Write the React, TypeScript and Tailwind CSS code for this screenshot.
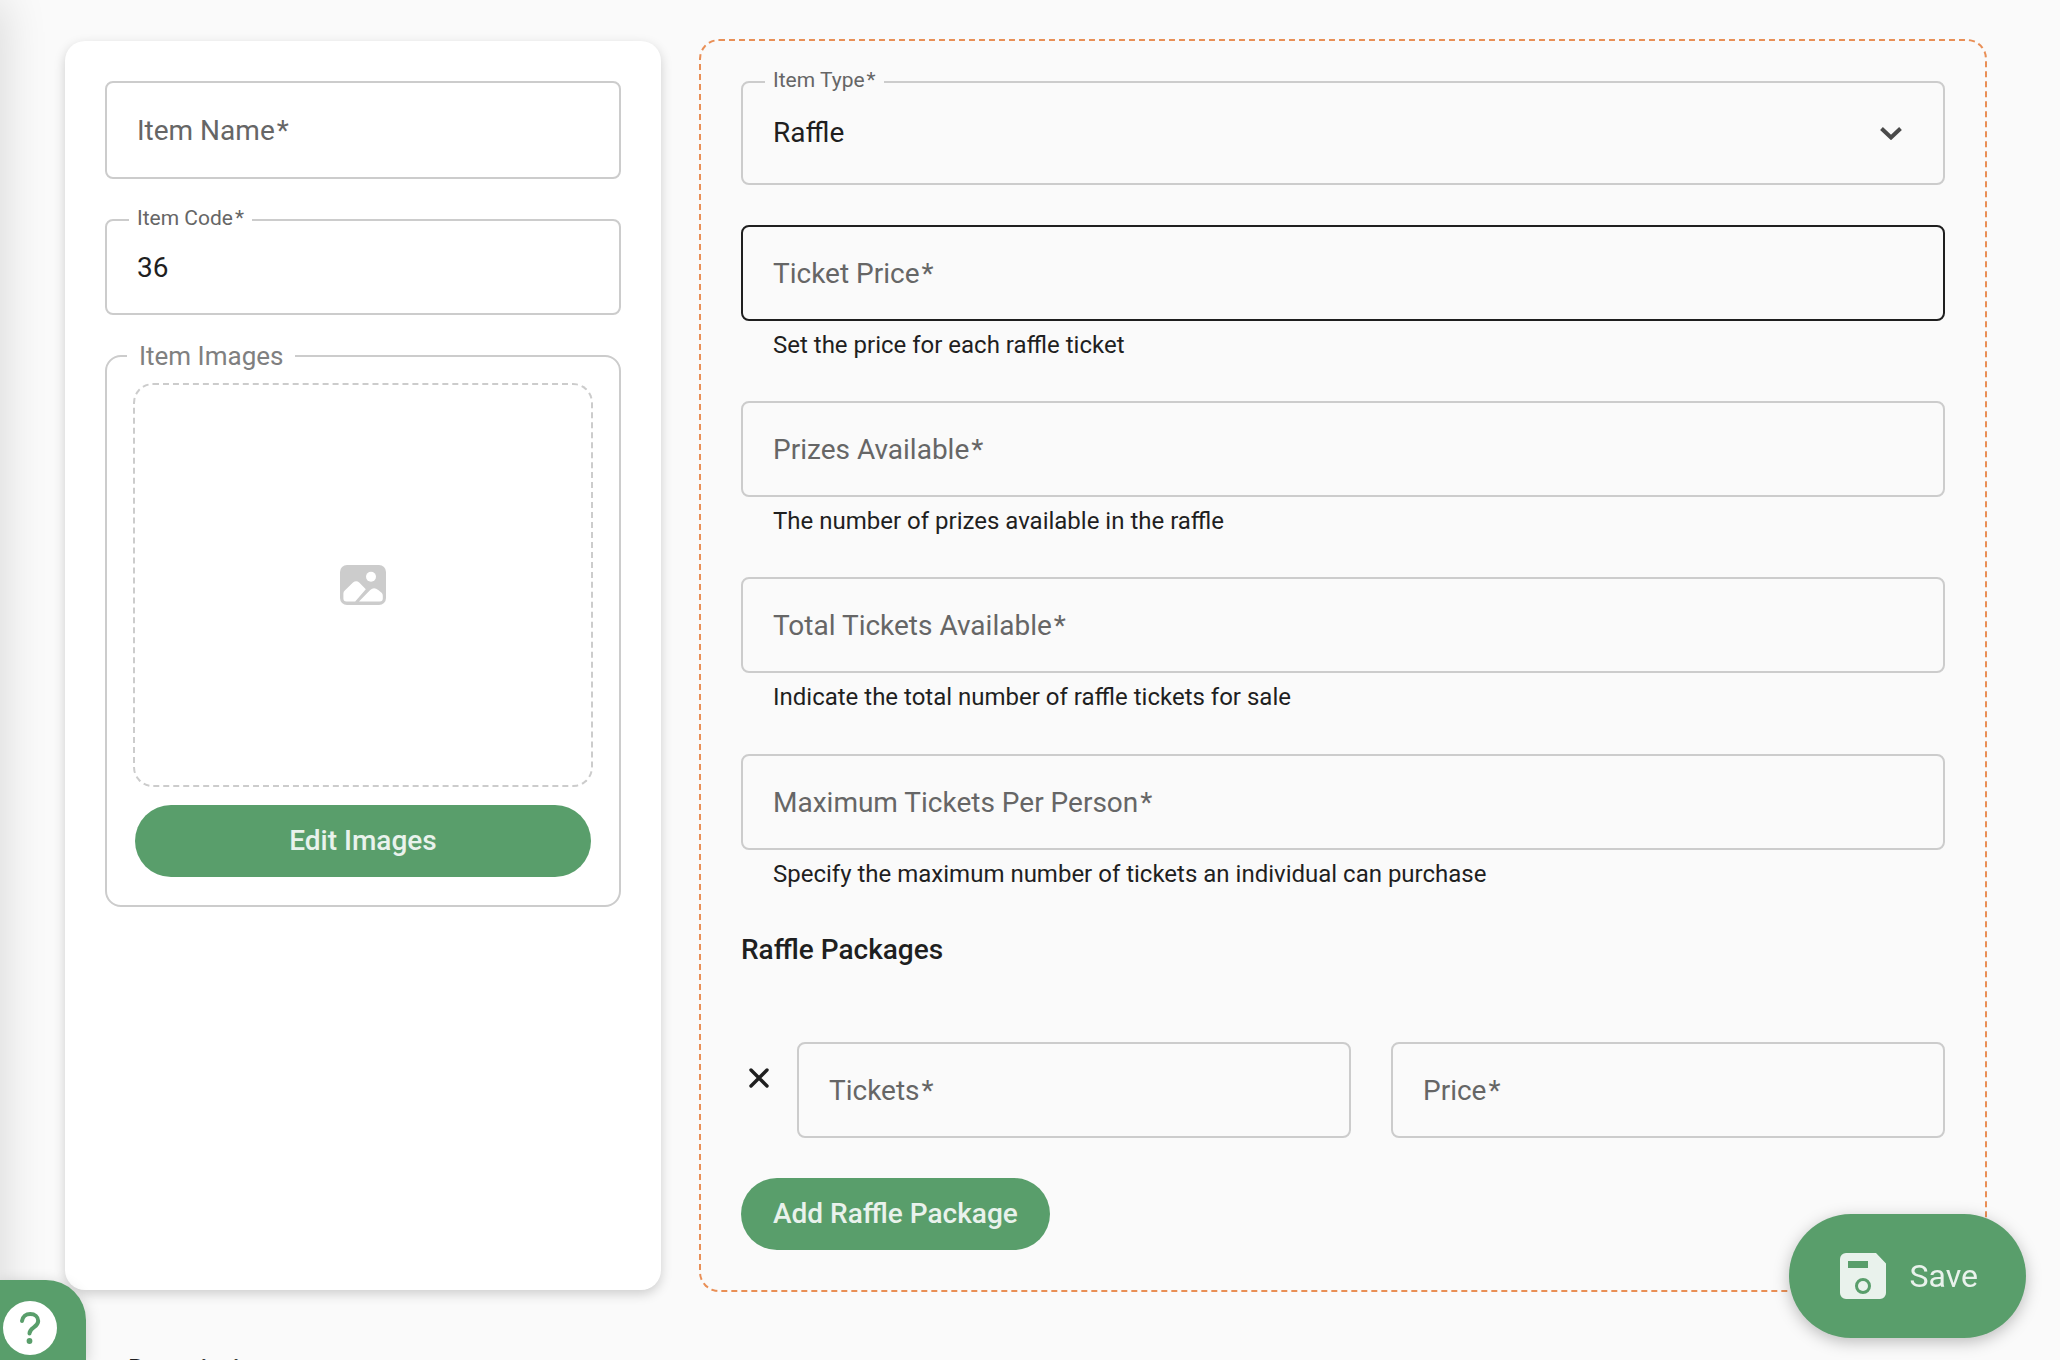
import React, { useId } from "react";

type FieldProps = {
  label: string;
  hint?: string;
  defaultValue?: string;
  active?: boolean;
  height?: string;
  className?: string;
};

const Required = () => <span className="ml-0.5">*</span>;

const Field: React.FC<FieldProps> = ({ label, hint, defaultValue, active, height = "h-24", className = "" }) => {
  const id = useId();
  const filled = defaultValue !== undefined;

  return (
    <div className={className}>
      <div className="relative">
        <input
          id={id}
          type="text"
          defaultValue={defaultValue}
          aria-describedby={hint ? `${id}-hint` : undefined}
          className={`block w-full rounded-lg border-2 bg-transparent px-[30px] text-[28px] text-[#1f1f1f] outline-none ${height} ${
            active ? "border-[#1f1f1f]" : "border-[#cccccc]"
          }`}
        />
        {filled ? (
          <label htmlFor={id} className="absolute -top-[13px] left-6 bg-white px-2 text-[21px] leading-6 text-[#666666]">
            {label}
            <Required />
          </label>
        ) : (
          <label
            htmlFor={id}
            className="pointer-events-none absolute inset-y-0 left-8 flex items-center pt-0.5 text-[28px] text-[#666666]"
          >
            {label}
            <Required />
          </label>
        )}
      </div>
      {hint && (
        <p id={`${id}-hint`} className="px-8 pt-2 text-2xl leading-8 text-[#1f1f1f]">
          {hint}
        </p>
      )}
    </div>
  );
};

const ImageIcon = () => (
  <svg viewBox="0 0 46 40" className="h-10 w-[46px]" aria-hidden="true">
    <rect width="46" height="40" rx="7" fill="#cccccc" />
    <circle cx="31" cy="11.8" r="5" fill="#fff" />
    <path
      d="M3.4 28.5q0-1.8 1.4-3L13 17.5q3.2-2.6 6.2 0l6.6 6.8L15.2 36.4H6.4q-3 0-3-3z"
      fill="#fff"
    />
    <path
      d="M19 36.4 30.2 24.9q3.8-3.4 8 0l3.4 2.8q1.2 1.2 1.2 3v2.7q0 3-3 3z"
      fill="#fff"
    />
  </svg>
);

const SaveIcon = () => (
  <svg viewBox="0 0 46 46" className="size-[46px]" aria-hidden="true">
    <path
      fillRule="evenodd"
      fill="currentColor"
      d="M6 0h30l10 10.500V40a6 6 0 0 1-6 6H6a6 6 0 0 1-6-6V6a6 6 0 0 1 6-6ZM8 8v7h20V8ZM23 25a8 8 0 1 0 0 16 8 8 0 0 0 0-16Z"
    />
    <circle cx="23" cy="33" r="5" fill="currentColor" />
  </svg>
);

const HelpIcon = () => (
  <svg viewBox="0 0 54 54" className="size-[54px]" aria-hidden="true">
    <circle cx="27" cy="27" r="27" fill="#fff" />
    <path
      d="M19 20c.6-4.500 4-7 8.200-7 4.600 0 8 2.900 8 7 0 6.500-8.700 6.300-8.700 12.500"
      fill="none"
      stroke="#599e6b"
      strokeWidth="4"
      strokeLinecap="round"
    />
    <circle cx="26.500" cy="40" r="2.900" fill="#599e6b" />
  </svg>
);

const ItemCard = () => (
  <section className="my-0.5 w-[596px] shrink-0 rounded-[20px] bg-white p-10 shadow-[0_4px_12px_rgba(0,0,0,0.18)]">
    <Field label="Item Name" height="h-[98px]" />
    <Field label="Item Code" defaultValue="36" className="mt-10" />

    <fieldset className="mt-6 rounded-2xl border-2 border-[#cccccc] px-[26px] pt-2.5 pb-7">
      <legend className="-ml-1.5 px-3 text-[26px] leading-[34px] text-[#808080]">Item Images</legend>
      <div className="flex h-[404px] items-center justify-center rounded-[20px] border-2 border-dashed border-[#cccccc]">
        <ImageIcon />
      </div>
      <div className="mt-[18px] px-0.5">
        <button
          type="button"
          className="h-[72px] w-full rounded-full bg-[#599e6b] text-[28px] font-medium text-[#e9f2ec]"
        >
          Edit Images
        </button>
      </div>
    </fieldset>
  </section>
);

const RafflePanel = () => (
  <section className="flex-1 rounded-[20px] border-2 border-dashed border-[#e98f56] p-10">
    <div className="relative">
      <select
        id="item-type"
        defaultValue="Raffle"
        className="block h-[104px] w-full appearance-none rounded-lg border-2 border-[#cccccc] bg-transparent px-[30px] text-[28px] text-[#1f1f1f] outline-none"
      >
        <option>Raffle</option>
      </select>
      <label
        htmlFor="item-type"
        className="absolute -top-[13px] left-6 bg-[#fafafa] px-2 text-[21px] leading-6 text-[#666666]"
      >
        Item Type
        <Required />
      </label>
      <div className="pointer-events-none absolute inset-y-0 right-[42px] flex items-center">
        <svg viewBox="0 0 24 14" className="h-3.5 w-6" aria-hidden="true">
          <path d="M2.500 2.500 12 11.500l9.500-9" fill="none" stroke="#4a4a4a" strokeWidth="4" />
        </svg>
      </div>
    </div>

    <div className="mt-10 flex flex-col gap-10">
      <Field label="Ticket Price" hint="Set the price for each raffle ticket" active />
      <Field label="Prizes Available" hint="The number of prizes available in the raffle" />
      <Field label="Total Tickets Available" hint="Indicate the total number of raffle tickets for sale" />
      <Field
        label="Maximum Tickets Per Person"
        hint="Specify the maximum number of tickets an individual can purchase"
        className="pt-px"
      />
      <h2 className="text-[28px] leading-10 font-medium text-[#1f1f1f]">Raffle Packages</h2>
    </div>

    <div className="mt-[72px] flex items-start">
      <button type="button" aria-label="Remove package" className="mt-[18px] mr-5 flex size-9 items-center justify-center">
        <svg viewBox="0 0 20 20" className="size-5" aria-hidden="true">
          <path d="M2 2l16 16M18 2 2 18" stroke="#1f1f1f" strokeWidth="3.4" strokeLinecap="round" />
        </svg>
      </button>
      <div className="grid flex-1 grid-cols-2 gap-10">
        <Field label="Tickets" />
        <Field label="Price" />
      </div>
    </div>

    <button
      type="button"
      className="mt-10 block h-[72px] rounded-full bg-[#599e6b] px-8 text-[28px] font-medium text-[#e9f2ec]"
    >
      Add Raffle Package
    </button>
  </section>
);

const App: React.FC = () => {
  return (
    <div className="relative h-screen overflow-hidden bg-[#fafafa] font-[Roboto,sans-serif]">
      {/* Edge of the collapsed side navigation */}
      <div className="absolute inset-y-0 -left-10 w-10 shadow-[0_0_48px_rgba(0,0,0,0.16)]"></div>

      <main className="pt-[39px] pr-[73px] pl-[65px]">
        <div className="flex gap-[38px]">
          <ItemCard />
          <RafflePanel />
        </div>
        <h2 className="mt-[58px] px-[63px] text-[28px] leading-10 font-medium text-[#1f1f1f]">Description</h2>
      </main>

      <button
        type="button"
        aria-label="Help"
        className="fixed bottom-0 left-0 flex h-20 w-[86px] justify-start rounded-tr-[40px] bg-[#599e6b] pt-[21px] pl-[3px] shadow-[0_4px_16px_rgba(0,0,0,0.2)]"
      >
        <HelpIcon />
      </button>

      <button
        type="button"
        className="fixed right-[34px] bottom-[22px] flex h-[124px] items-center gap-6 rounded-full bg-[#599e6b] pr-12 pl-[51px] text-[32px] text-[#e9f2ec] shadow-[0_4px_16px_rgba(0,0,0,0.25)]"
      >
        <SaveIcon />
        Save
      </button>
    </div>
  );
};

export default App;
